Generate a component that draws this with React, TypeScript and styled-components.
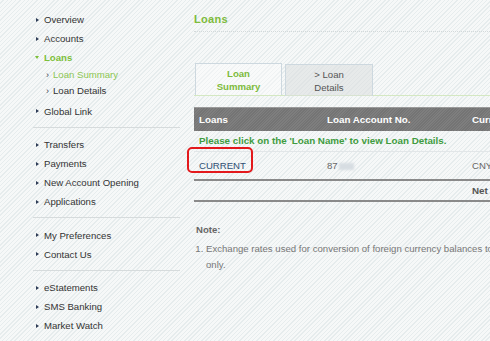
import React from "react";
import styled, { createGlobalStyle } from "styled-components";

const Global = createGlobalStyle`
  html, body { margin: 0; padding: 0; }
  body {
    font-family: "Liberation Sans", Arial, sans-serif;
    background-color: #f4f7f7;
    background-image: repeating-linear-gradient(135deg, #f6f8f8 0px, #f6f8f8 2px, #e6eced 2px, #e6eced 3px);
    overflow: hidden;
  }
`;

const Page = styled.div`
  display: flex;
  width: 490px;
  height: 341px;
  overflow: hidden;
`;

const Sidebar = styled.nav`
  width: 180px;
  flex: none;
  padding-top: 10px;
  box-sizing: border-box;
`;

const Group = styled.ul`
  list-style: none;
  margin: 0;
  padding: 0 0 0 34px;
`;

const Separator = styled.div`
  margin: 6px 0 7.5px 33px;
  border-top: 1px solid #d6dbdc;
`;

const Item = styled.li<{ $active?: boolean }>`
  height: 19px;
  line-height: 19px;
  font-size: 9.6px;
  color: ${(p) => (p.$active ? "#7cbf3a" : "#333")};
  font-weight: ${(p) => (p.$active ? "bold" : "normal")};
  display: flex;
  align-items: center;
  gap: 5px;
`;

const Arrow = styled.span`
  width: 0;
  height: 0;
  border-top: 2.5px solid transparent;
  border-bottom: 2.5px solid transparent;
  border-left: 3px solid #2d3b55;
  margin-left: 2px;
`;

const DownArrow = styled.span`
  width: 0;
  height: 0;
  border-left: 2.5px solid transparent;
  border-right: 2.5px solid transparent;
  border-top: 3px solid #7cbf3a;
  margin-left: 1px;
`;

const SubList = styled.ul`
  list-style: none;
  margin: 0 0 2.5px 0;
  padding: 0 0 0 12px;
`;

const SubItem = styled.li<{ $active?: boolean }>`
  height: 16px;
  line-height: 16px;
  font-size: 9.6px;
  color: ${(p) => (p.$active ? "#8cc653" : "#333")};
  display: flex;
  gap: 4px;
`;

const Chevron = styled.span`
  color: #445;
  font-size: 9px;
`;

const Main = styled.main`
  flex: none;
  width: 320px;
  padding-left: 14px;
  box-sizing: border-box;
  overflow: hidden;
`;

const Title = styled.h1`
  margin: 0;
  height: 32px;
  line-height: 38px;
  font-size: 11px;
  font-weight: bold;
  color: #7dbb3c;
  border-bottom: 1px dotted #d3d9da;
  box-sizing: border-box;
  letter-spacing: 0.3px;
`;

const TabBar = styled.div`
  display: flex;
  gap: 3px;
  margin-top: 31px;
  padding-left: 1px;
  border-bottom: 1px solid #d4e8c2;
  height: 33px;
  box-sizing: border-box;
  width: 600px;
`;

const Tab = styled.div<{ $active?: boolean }>`
  width: ${(p) => (p.$active ? 87 : 88)}px;
  height: 32px;
  box-sizing: border-box;
  margin-top: ${(p) => (p.$active ? 0 : 1)}px;
  border: 1px solid #cdd8df;
  border-bottom: none;
  background: ${(p) => (p.$active ? "rgba(255,255,255,0.35)" : "rgba(218,223,223,0.55)")};
  display: flex;
  flex-direction: column;
  align-items: center;
  justify-content: center;
  font-size: 9.6px;
  line-height: 13px;
  color: ${(p) => (p.$active ? "#7dbb3c" : "#555")};
  font-weight: ${(p) => (p.$active ? "bold" : "normal")};
  text-align: center;
`;

const Table = styled.div`
  margin-top: 11px;
  width: 600px;
`;

const HeaderRow = styled.div`
  display: grid;
  grid-template-columns: 128px 145px 1fr;
  height: 24px;
  align-items: center;
  background-color: #7b7b7b;
  background-image: repeating-linear-gradient(135deg, #7e7e7e 0px, #7e7e7e 1px, #747474 1px, #747474 2px);
  border-top: 1px solid #9a9a9a;
  box-sizing: border-box;
  color: #fff;
  font-weight: bold;
  font-size: 9.8px;
`;

const Cell = styled.div`
  padding-left: 5px;
  white-space: nowrap;
  position: relative;
`;

const Instruction = styled.div`
  height: 20px;
  line-height: 20px;
  padding-left: 5px;
  color: #3f9c3f;
  font-weight: bold;
  font-size: 9.8px;
  border-bottom: 1px solid #e2e6e8;
`;

const DataRow = styled.div`
  display: grid;
  grid-template-columns: 128px 145px 1fr;
  height: 27px;
  align-items: center;
  font-size: 9.6px;
  color: #666;
  border-bottom: 2px solid #8a8a8a;
`;

const LoanLink = styled.span`
  color: #2f4f73;
`;

const Highlight = styled.span`
  position: absolute;
  left: -7px;
  top: -13px;
  width: 66px;
  height: 26px;
  box-sizing: border-box;
  border: 2px solid #e3191c;
  border-radius: 5px;
`;

const Masked = styled.span`
  display: inline-block;
  width: 15px;
  height: 7px;
  margin-left: 1px;
  background: #d7dde2;
  filter: blur(0.8px);
  vertical-align: middle;
`;

const TotalRow = styled.div`
  display: grid;
  grid-template-columns: 128px 145px 1fr;
  height: 19px;
  align-items: center;
  border-bottom: 2px solid #8a8a8a;
  font-size: 9.8px;
  font-weight: bold;
  color: #555;
`;

const Notes = styled.div`
  margin-top: 20px;
  padding-left: 2px;
  font-size: 9.6px;
  color: #777;
`;

const NoteTitle = styled.div`
  font-weight: bold;
  color: #666;
  height: 16px;
  line-height: 16px;
  margin-bottom: 3px;
`;

const NoteList = styled.ol`
  margin: 0;
  padding: 0 0 0 10px;
  line-height: 16px;
  width: 300px;
  white-space: nowrap;
  & li::marker { content: "1. "; }
`;

const menu1 = ["Overview", "Accounts"];
const menu2 = ["Transfers", "Payments", "New Account Opening", "Applications"];
const menu3 = ["My Preferences", "Contact Us"];
const menu4 = ["eStatements", "SMS Banking", "Market Watch"];

const renderItems = (items: string[]) =>
  items.map((t) => (
    <Item key={t}>
      <Arrow />
      {t}
    </Item>
  ));

export default function App() {
  return (
    <>
      <Global />
      <Page>
        <Sidebar>
          <Group>
            {renderItems(menu1)}
            <Item $active>
              <DownArrow />
              Loans
            </Item>
            <SubList>
              <SubItem $active>
                <Chevron>›</Chevron>Loan Summary
              </SubItem>
              <SubItem>
                <Chevron>›</Chevron>Loan Details
              </SubItem>
            </SubList>
            {renderItems(["Global Link"])}
          </Group>
          <Separator />
          <Group>{renderItems(menu2)}</Group>
          <Separator />
          <Group>{renderItems(menu3)}</Group>
          <Separator />
          <Group>{renderItems(menu4)}</Group>
        </Sidebar>
        <Main>
          <Title>Loans</Title>
          <TabBar>
            <Tab $active>
              <span>Loan</span>
              <span>Summary</span>
            </Tab>
            <Tab>
              <span>&gt; Loan</span>
              <span>Details</span>
            </Tab>
          </TabBar>
          <Table>
            <HeaderRow>
              <Cell>Loans</Cell>
              <Cell>Loan Account No.</Cell>
              <Cell>Currency</Cell>
            </HeaderRow>
            <Instruction>Please click on the 'Loan Name' to view Loan Details.</Instruction>
            <DataRow>
              <Cell>
                <LoanLink>CURRENT</LoanLink>
                <Highlight />
              </Cell>
              <Cell>
                87<Masked />
              </Cell>
              <Cell>CNY</Cell>
            </DataRow>
            <TotalRow>
              <Cell />
              <Cell />
              <Cell>Net</Cell>
            </TotalRow>
          </Table>
          <Notes>
            <NoteTitle>Note:</NoteTitle>
            <NoteList>
              <li>
                Exchange rates used for conversion of foreign currency balances to
                <br />
                only.
              </li>
            </NoteList>
          </Notes>
        </Main>
      </Page>
    </>
  );
}
